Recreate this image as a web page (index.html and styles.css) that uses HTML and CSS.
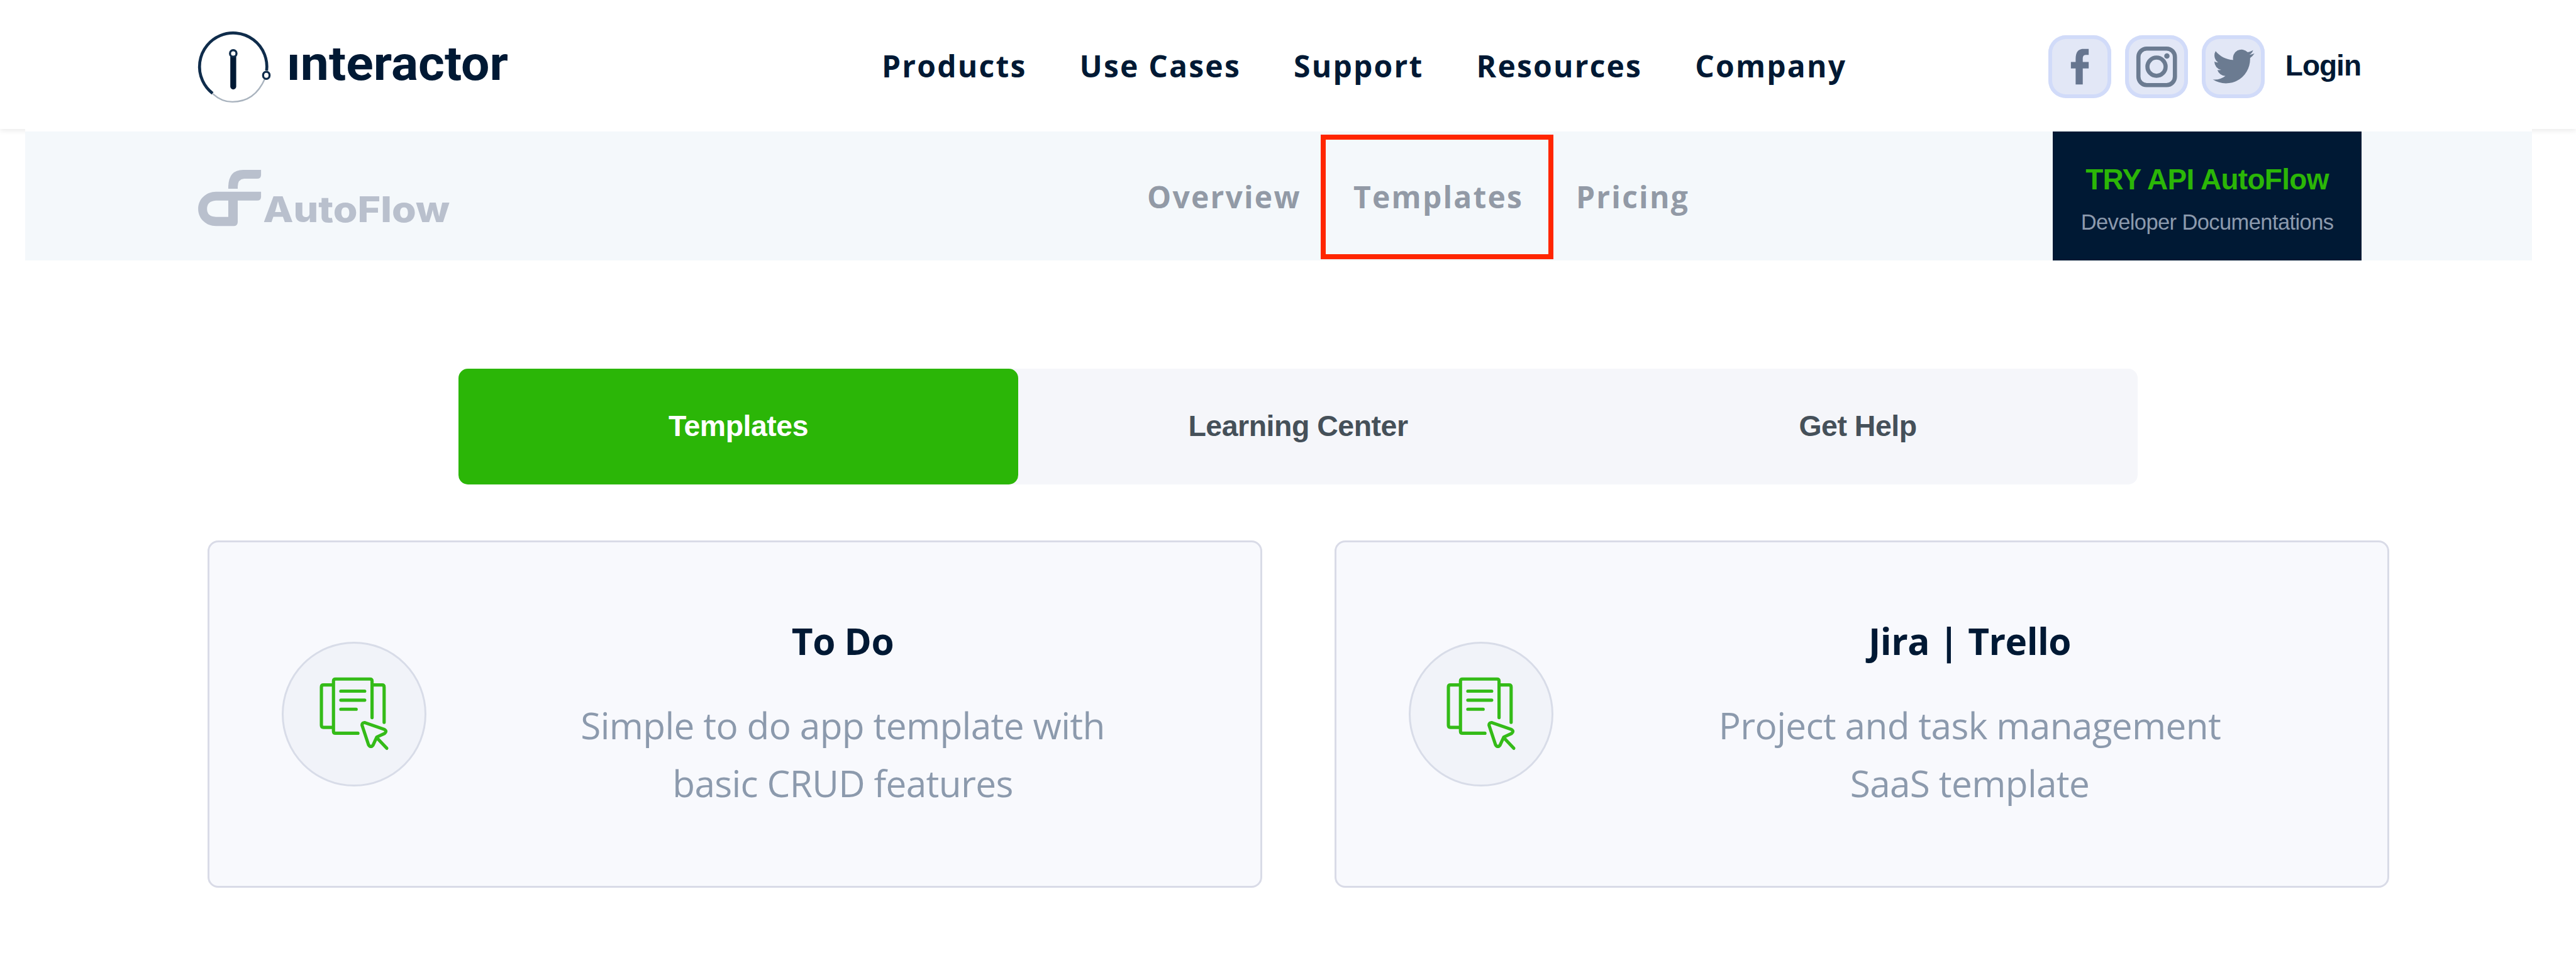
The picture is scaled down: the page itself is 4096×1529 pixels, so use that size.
FILE: index.html
```html
<!DOCTYPE html>
<html lang="en">
<head>
<meta charset="utf-8">
<title>AutoFlow Templates</title>
<link rel="stylesheet" href="styles.css">
</head>
<body>
<header class="header">
  <div class="header-inner">
    <svg class="logo" width="494" height="116" viewBox="0 0 526 123" fill="none">
      <path d="M24.500 105.500A57 57 0 1 1 116 67" stroke="#0f2c4b" stroke-width="5"/>
      <path d="M24.500 106Q40 120 58 120Q96 120 113 81" stroke="#a9b3be" stroke-width="2.500"/>
      <ellipse cx="115.500" cy="75" rx="5.500" ry="6" fill="#fff" stroke="#0f2c4b" stroke-width="3.500"/>
      <path d="M59.500 43V94" stroke="#001934" stroke-width="10" stroke-linecap="round"/>
      <circle cx="59.500" cy="38" r="5.500" fill="#fff" stroke="#0f2c4b" stroke-width="3.500"/>
      <text class="logo-text" x="150" y="83" textLength="375" lengthAdjust="spacingAndGlyphs">ınteractor</text>
    </svg>
    <nav class="nav">
      <a>Products</a><a>Use Cases</a><a>Support</a><a>Resources</a><a>Company</a>
    </nav>
    <div class="account">
      <span class="social"><svg width="100%" height="100%" viewBox="0 0 106 106"><path fill="#66758f" d="M46 83V56H38V45H46V40C46 29 50 23 59 23H68V33H63C59 33 58 36 58 40V45H68V56H58V83Z"/></svg></span>
      <span class="social"><svg width="100%" height="100%" viewBox="0 0 106 106" fill="none" stroke="#6b7b91"><rect x="22.500" y="22.500" width="61.500" height="61.500" rx="14" stroke-width="7"/><circle cx="53" cy="53" r="15.300" stroke-width="7"/><circle cx="70.500" cy="35" r="4.500" fill="#6b7b91" stroke="none"/></svg></span>
      <span class="social"><svg width="100%" height="100%" viewBox="0 0 106 106"><path fill="#6b7b91" transform="translate(18.500 17.500) scale(2.920)" d="M23.950 4.570a10 10 0 0 1-2.820.770 4.960 4.960 0 0 0 2.160-2.720c-.950.550-2 .950-3.130 1.180a4.920 4.920 0 0 0-8.380 4.480C7.690 8.090 4.070 6.130 1.640 3.160a4.820 4.820 0 0 0-.670 2.480c0 1.710.870 3.210 2.190 4.100a4.900 4.900 0 0 1-2.230-.620v.060a4.920 4.920 0 0 0 3.950 4.830 5 5 0 0 1-2.210.080 4.940 4.940 0 0 0 4.600 3.420A9.870 9.870 0 0 1 0 19.540a13.990 13.990 0 0 0 7.550 2.210c9.050 0 14-7.500 14-13.980 0-.210 0-.420-.020-.630a9.940 9.940 0 0 0 2.460-2.550z"/></svg></span>
      <a class="login">Login</a>
    </div>
  </div>
</header>
<section class="subheader">
  <svg class="autoflow" width="402" height="92" viewBox="0 0 428 98" fill="#b9c0cd">
    <path d="M51 32V28Q52 0 76 0H106.500V9Q106 15 100 15H78Q67 16 67 28V32Z"/>
    <path fill-rule="evenodd" d="M30 37H106.500V46Q106 52 100 52H67V88Q67 95 61 95H30C14 95 0 83 0 66S14 37 30 37ZM51 52H30Q15 53 15 66T30 79.500H51Z"/>
    <text class="autoflow-text" x="110" y="88" textLength="316" lengthAdjust="spacingAndGlyphs">AutoFlow</text>
  </svg>
  <nav class="subnav">
    <a>Overview</a><a class="marked">Templates</a><a>Pricing</a>
  </nav>
  <a class="api">
    <strong>TRY API AutoFlow</strong>
    <span>Developer Documentations</span>
  </a>
</section>
<main>
  <div class="tabs">
    <a class="tab active">Templates</a><a class="tab">Learning Center</a><a class="tab">Get Help</a>
  </div>
  <div class="cards">
    <article class="card">
      <div class="badge">
        <svg width="111" height="118" viewBox="80 76 118 126" fill="none" stroke="#34bb18" stroke-width="5.500" stroke-linecap="round" stroke-linejoin="round"><path d="M145 171.500H107Q103.500 171.500 103.500 168V83Q103.500 79.500 107 79.500H165.500Q169 79.500 169 83V145M103.500 89.500H86.500Q83 89.500 83 93V158Q83 161.500 86.500 161.500H103.500M169 89.500H186Q189.500 89.500 189.500 93V153M116 100H156.500M116 115.300H156.500M116 130.700H142"/><path d="M157 153.500L190 165Q195 168 190 172L177 178L171 191Q167 197 163 191L152 158Q152 153 157 153.500ZM177 179L194 197"/></svg>
      </div>
      <div class="card-text">
        <h2>To Do</h2>
        <p>Simple to do app template with<br>basic CRUD features</p>
      </div>
    </article>
    <article class="card">
      <div class="badge">
        <svg width="111" height="118" viewBox="80 76 118 126" fill="none" stroke="#34bb18" stroke-width="5.500" stroke-linecap="round" stroke-linejoin="round"><path d="M145 171.500H107Q103.500 171.500 103.500 168V83Q103.500 79.500 107 79.500H165.500Q169 79.500 169 83V145M103.500 89.500H86.500Q83 89.500 83 93V158Q83 161.500 86.500 161.500H103.500M169 89.500H186Q189.500 89.500 189.500 93V153M116 100H156.500M116 115.300H156.500M116 130.700H142"/><path d="M157 153.500L190 165Q195 168 190 172L177 178L171 191Q167 197 163 191L152 158Q152 153 157 153.500ZM177 179L194 197"/></svg>
      </div>
      <div class="card-text">
        <h2>Jira | Trello</h2>
        <p>Project and task management<br>SaaS template</p>
      </div>
    </article>
  </div>
</main>
</body>
</html>
```
FILE: styles.css
```css
* { box-sizing: border-box; }
body { margin: 0; background: #fff; font-family: "Open Sans", sans-serif; color: #001934; }
.header { height: 205px; box-shadow: 0 3px 8px rgba(0, 0, 0, .08); }
.header-inner { height: 209px; margin: 0 70px 0 40px; padding: 0 274px 0 275px; background: #fff; display: flex; }
.logo { margin-top: 49px; overflow: visible; flex: none; }
.logo-text { font: 700 81px Roboto, sans-serif; fill: #001934; }
.nav { display: flex; gap: 84px; margin-left: 593px; font-size: 48px; font-weight: 700; line-height: 66px; letter-spacing: 2.2px; padding-top: 72px; white-space: nowrap; }
.account { display: flex; gap: 22px; padding-top: 56px; margin-left: auto; }
.social { width: 100px; height: 100px; border-radius: 28px; background: #e2e7f6; box-shadow: inset 0 0 0 6px #d1dbf9; }
.social svg { display: block; }
.login { margin-left: 11px; font: 700 46px/52px "Liberation Sans", sans-serif; letter-spacing: -1px; padding-top: 22px; margin-right: -2px; }
.subheader { height: 205px; margin: 4px 70px 0 40px; padding: 0 271px 0 275px; background: #f4f8fb; display: flex; }
.autoflow { margin-top: 61px; overflow: visible; flex: none; }
.autoflow-text { font: 800 60.500px Inter, sans-serif; }
.subnav { display: flex; margin-left: 1107px; padding-top: 5px; font-size: 48px; font-weight: 700; line-height: 66px; letter-spacing: 2.2px; color: #929aa6; }
.subnav a { width: 276px; padding-top: 66px; }
.subnav .marked { width: 370px; height: 198px; border: 8px solid #ff2600; padding: 58px 0 0 44px; }
.subnav .marked + a { padding-left: 36px; }
.api { width: 491px; margin-left: auto; background: #001934; font-family: "Liberation Sans", sans-serif; text-align: center; display: flex; flex-direction: column; padding-top: 50px; white-space: nowrap; }
.api strong { font-size: 46px; line-height: 52px; letter-spacing: -.7px; color: #2bb607; }
.api span { font-size: 34.500px; line-height: 40px; letter-spacing: -.6px; margin-top: 22px; color: #8c9aad; }
.tabs { width: 2670px; height: 184px; margin: 172px 0 0 729px; display: grid; grid-template-columns: repeat(3, 1fr); background: #f5f6fa; border-radius: 15px; }
.tab { border-radius: 15px; display: flex; align-items: center; justify-content: center; font: 700 46.500px/52px "Liberation Sans", sans-serif; letter-spacing: -.5px; color: #455059; padding-bottom: 2px; }
.tab.active { background: #2bb607; color: #fff; }
.cards { display: grid; grid-template-columns: 1677px 1677px; gap: 115px; margin: 89px 0 0 330px; }
.card { height: 552px; border: 3px solid #d9dbe7; border-radius: 17px; background: #f8f9fd; display: flex; }
.badge { flex: none; width: 230px; height: 230px; margin: 158px 0 0 115px; border: 3px solid #d8dce8; border-radius: 50%; background: #f1f3f9; display: flex; align-items: center; justify-content: center; }
.card-text { flex: 1; text-align: center; padding: 116px 2px 0 0; }
.card h2 { margin: 0; font-size: 58.500px; line-height: 80px; letter-spacing: -.5px; font-weight: 700; }
.card p { margin: 48px 0 0; font-size: 58.500px; line-height: 92.400px; font-weight: 450; letter-spacing: -.650px; color: #8c9aad; white-space: nowrap; }
```
